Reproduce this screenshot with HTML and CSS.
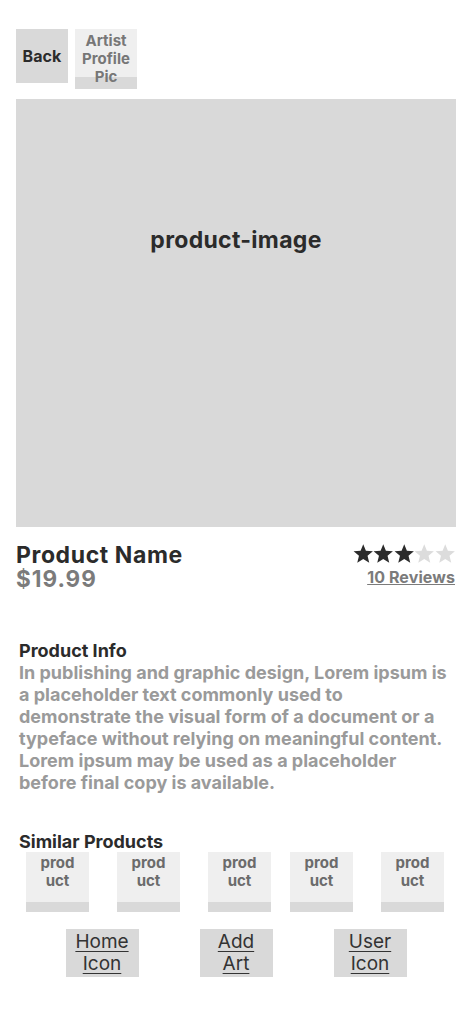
FILE: index.html
```html
<!DOCTYPE html>
<html>
<head>
<meta charset="utf-8">
<link rel="stylesheet" href="styles.css">
</head>
<body>
<div class="page">
  <header class="top">
    <div class="back">Back</div>
    <div class="artist"><span>Artist Profile Pic</span></div>
  </header>
  <div class="hero">product-image</div>
  <section class="summary">
    <div class="title-block">
      <div class="name">Product Name</div>
      <div class="price">$19.99</div>
    </div>
    <div class="rating">
      <div class="stars">
        <svg class="star on" viewBox="0 0 24 24"><path d="M12 1.5l3.1 7.6 8.2.6-6.3 5.3 2 8-7-4.4-7 4.4 2-8L.7 9.7l8.2-.6z"/></svg>
        <svg class="star on" viewBox="0 0 24 24"><path d="M12 1.5l3.1 7.6 8.2.6-6.3 5.3 2 8-7-4.4-7 4.4 2-8L.7 9.7l8.2-.6z"/></svg>
        <svg class="star on" viewBox="0 0 24 24"><path d="M12 1.5l3.1 7.6 8.2.6-6.3 5.3 2 8-7-4.4-7 4.4 2-8L.7 9.7l8.2-.6z"/></svg>
        <svg class="star off" viewBox="0 0 24 24"><path d="M12 1.5l3.1 7.6 8.2.6-6.3 5.3 2 8-7-4.4-7 4.4 2-8L.7 9.7l8.2-.6z"/></svg>
        <svg class="star off" viewBox="0 0 24 24"><path d="M12 1.5l3.1 7.6 8.2.6-6.3 5.3 2 8-7-4.4-7 4.4 2-8L.7 9.7l8.2-.6z"/></svg>
      </div>
      <div class="reviews">10 Reviews</div>
    </div>
  </section>
  <section class="info">
    <h2 class="info-title">Product Info</h2>
    <p class="info-text">In publishing and graphic design, Lorem ipsum is a placeholder text commonly used to demonstrate the visual form of a document or a typeface without relying on meaningful content. Lorem ipsum may be used as a placeholder before final copy is available.</p>
  </section>
  <section class="similar">
    <h2 class="similar-title">Similar Products</h2>
    <div class="tiles">
      <div class="tile"><span>prod uct</span></div>
      <div class="tile"><span>prod uct</span></div>
      <div class="tile"><span>prod uct</span></div>
      <div class="tile"><span>prod uct</span></div>
      <div class="tile"><span>prod uct</span></div>
    </div>
  </section>
  <nav class="nav">
    <div class="nav-item"><u>Home Icon</u></div>
    <div class="nav-item"><u>Add Art</u></div>
    <div class="nav-item"><u>User Icon</u></div>
  </nav>
</div>
</body>
</html>
```
FILE: styles.css
```css
* { box-sizing: border-box; }
html, body { margin: 0; padding: 0; background: #fff; }
body { font-family: Inter, "Noto Sans", sans-serif; color: #2b2b2b; }
.page { width: 473px; padding: 29px 17px 0 16px; display: flex; flex-direction: column; }

.top { display: flex; align-items: flex-start; gap: 7px; }
.back {
  width: 52px; height: 54px; background: #d9d9d9;
  display: flex; align-items: center; justify-content: center;
  font-weight: 700; font-size: 16px; color: #2b2b2b; letter-spacing: 0.1px;
}
.artist {
  width: 62px; height: 60px; background: linear-gradient(#efefef 0 48px, #d9d9d9 48px);
  display: flex; align-items: center; justify-content: center; text-align: center;
  font-weight: 700; font-size: 15px; line-height: 18px; color: #777; padding-bottom: 1px;
}
.artist span { width: 50px; }

.hero {
  margin-top: 10px; width: 440px; height: 428px; background: #d9d9d9;
  display: flex; align-items: center; justify-content: center;
  padding-bottom: 147px;
  font-weight: 700; font-size: 23px; letter-spacing: 0.3px; color: #2b2b2b;
}

.summary { display: flex; justify-content: space-between; align-items: flex-start; margin-top: 16px; padding-right: 1px; }
.title-block { display: flex; flex-direction: column; }
.name { font-weight: 700; font-size: 23px; line-height: 24px; color: #2b2b2b; letter-spacing: 0.6px; }
.price { font-weight: 700; font-size: 22.5px; line-height: 24px; color: #7b7b7b; letter-spacing: 1px; }
.rating { display: flex; flex-direction: column; align-items: flex-end; }
.stars { display: flex; gap: 0; height: 22px; }
.star { width: 20.5px; height: 20.5px; }
.star.on { fill: #2b2b2b; }
.star.off { fill: #dcdcdc; }
.reviews { font-weight: 700; font-size: 16px; line-height: 20px; color: #7b7b7b; text-decoration: underline; margin-top: 2px; letter-spacing: 0.1px; }

.info { margin-top: 49px; padding-left: 3px; }
.info-title { margin: 0; font-weight: 700; font-size: 18px; line-height: 22px; color: #2b2b2b; }
.info-text { margin: 0; width: 430px; font-weight: 700; font-size: 18px; line-height: 22px; color: #9a9a9a; }

.similar { margin-top: 38px; padding-left: 3px; }
.similar-title { margin: 0; font-weight: 700; font-size: 18px; line-height: 20px; color: #2b2b2b; }
.tiles { display: grid; grid-template-columns: 91px 91px 82px 91px 63px; margin-left: 7px; margin-top: 0; }
.tile {
  width: 63px; height: 60px; background: linear-gradient(#efefef 0 50px, #d9d9d9 50px);
  display: flex; justify-content: center; padding-top: 2px;
  font-weight: 700; font-size: 15px; line-height: 18px; color: #6b6b6b; text-align: center;
}
.tile span { width: 40px; }

.nav { display: flex; justify-content: center; gap: 61px; margin-top: 17px; }
.nav-item {
  width: 73px; height: 48px; background: #d9d9d9;
  display: flex; align-items: center; justify-content: center; text-align: center;
  font-size: 19px; line-height: 22px; color: #333;
}
.nav-item u { width: 56px; text-underline-offset: 3px; }
```
